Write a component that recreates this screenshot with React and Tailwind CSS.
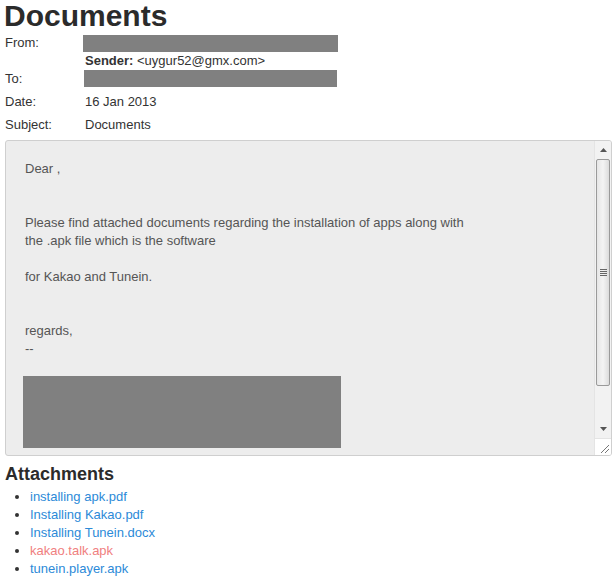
import React from "react";

const attachments = [
  { name: "installing apk.pdf", red: false },
  { name: "Installing Kakao.pdf", red: false },
  { name: "Installing Tunein.docx", red: false },
  { name: "kakao.talk.apk", red: true },
  { name: "tunein.player.apk", red: false },
];

function Scrollbar() {
  return (
    <div className="flex w-[17px] flex-col border-l border-[#e4e4e4] bg-[#f2f2f2]">
      {/* up arrow */}
      <div className="flex h-[18px] items-center justify-center">
        <svg width="7" height="4" viewBox="0 0 7 4">
          <path d="M3.5 0 L7 4 L0 4 Z" fill="#555" />
        </svg>
      </div>
      {/* thumb */}
      <div className="mx-[1px] flex h-[227px] items-center justify-center rounded-[2px] border border-[#9a9a9a] bg-gradient-to-r from-[#e6e6e6] via-[#f4f4f4] to-[#dcdcdc]">
        <div className="flex flex-col gap-[1px]">
          <div className="h-[1px] w-[7px] bg-[#666]" />
          <div className="h-[1px] w-[7px] bg-[#666]" />
          <div className="h-[1px] w-[7px] bg-[#666]" />
          <div className="h-[1px] w-[7px] bg-[#666]" />
        </div>
      </div>
      <div className="flex-1" />
      {/* down arrow */}
      <div className="flex h-[18px] items-center justify-center">
        <svg width="7" height="4" viewBox="0 0 7 4">
          <path d="M0 0 L7 0 L3.5 4 Z" fill="#555" />
        </svg>
      </div>
      {/* resize grip */}
      <div className="flex h-[17px] items-end justify-end border-t border-[#e4e4e4] bg-white p-[2px]">
        <svg width="9" height="9" viewBox="0 0 9 9">
          <path d="M9 1 L1 9 M9 5 L5 9" stroke="#777" strokeWidth="1" />
        </svg>
      </div>
    </div>
  );
}

export default function App() {
  return (
    <div className="w-[616px] h-[576px] overflow-hidden bg-white px-[5px] font-['Liberation_Sans',Arial,sans-serif] text-[#333]">
      <h1 className="text-[30px] font-bold leading-[32px] text-[#2b2b2b] -ml-[1px]">
        Documents
      </h1>

      {/* header table */}
      <div className="mt-[1px] grid grid-cols-[80px_1fr] text-[13px] leading-[18px] text-[#333]">
        <div className="pt-[1px]">From:</div>
        <div className="pt-[2px]">
          <div className="h-[17px] w-[255px] -ml-[2px] bg-[#808080]" />
        </div>
        <div />
        <div>
          <span className="font-bold">Sender:</span> &lt;uygur52@gmx.com&gt;
        </div>
        <div>To:</div>
        <div>
          <div className="h-[17px] w-[253px] -ml-[1px] bg-[#808080]" />
        </div>
        <div className="pt-[5px]">Date:</div>
        <div className="pt-[5px]">16 Jan 2013</div>
        <div className="pt-[5px]">Subject:</div>
        <div className="pt-[5px]">Documents</div>
      </div>

      {/* message body */}
      <div className="mt-[6px] flex h-[316px] w-[607px] overflow-hidden rounded-[3px] border border-[#cfcfcf] bg-[#ededed]">
        <div className="flex-1 overflow-hidden px-[19px] pt-[19px] text-[13px] leading-[18px] text-[#555]">
          <p>Dear ,</p>
          <p>&nbsp;</p>
          <p>&nbsp;</p>
          <p>Please find attached documents regarding the installation of apps along with</p>
          <p>the .apk file which is the software</p>
          <p>&nbsp;</p>
          <p>for Kakao and Tunein.</p>
          <p>&nbsp;</p>
          <p>&nbsp;</p>
          <p>regards,</p>
          <p>--</p>
          <div className="mt-[18px] -ml-[2px] h-[72px] w-[318px] bg-[#808080]" />
        </div>
        <Scrollbar />
      </div>

      {/* attachments */}
      <h2 className="mt-[8px] text-[18px] font-bold leading-[20px] text-[#2b2b2b]">
        Attachments
      </h2>
      <ul className="mt-[4px] list-disc pl-[25px] text-[13px] leading-[18px] marker:text-[#333]">
        {attachments.map((a) => (
          <li key={a.name}>
            <a href="#" className={a.red ? "text-[#f08080]" : "text-[#2c8ad8]"}>
              {a.name}
            </a>
          </li>
        ))}
      </ul>
    </div>
  );
}
